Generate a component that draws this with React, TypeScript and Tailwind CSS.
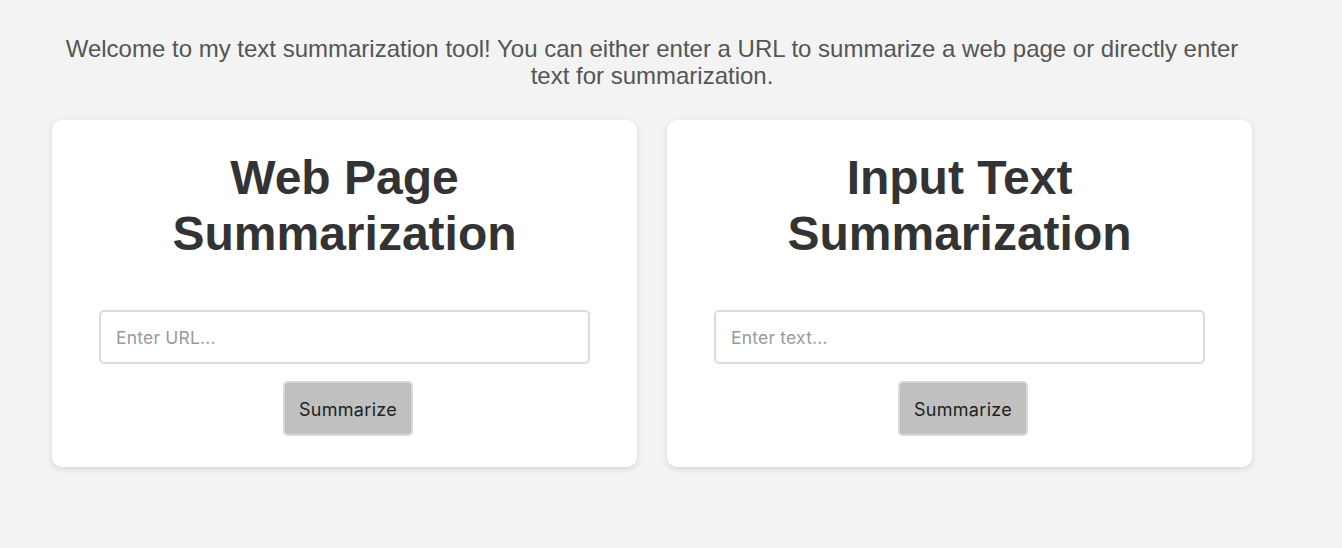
import React from "react";

function Card({ title1, title2, placeholder }: { title1: string; title2: string; placeholder: string }) {
  return (
    <div className="flex w-[585px] flex-col items-center rounded-[10px] bg-white pt-[30px] pb-[31px] shadow-[0_2px_6px_rgba(0,0,0,0.12)]">
      <h1
        className="text-center text-[48px] font-bold leading-[56px] text-[#333]"
        style={{ fontFamily: '"Liberation Sans", Arial, sans-serif' }}
      >
        {title1}
        <br />
        {title2}
      </h1>
      <input
        type="text"
        placeholder={placeholder}
        className="mt-[48px] h-[54px] w-[491px] rounded-[5px] border-2 border-[#dcdcdc] bg-white px-[15px] text-[17.5px] tracking-[0.2px] text-[#333] placeholder:text-[#9a9a9a] outline-none"
        style={{ fontFamily: 'Inter, "Noto Sans", sans-serif' }}
      />
      <button
        className="ml-[7px] mt-[17px] h-[55px] w-[130px] rounded-[5px] border-2 border-[#d8d8d8] bg-[#c0c0c0] pt-[2px] text-[18px] tracking-[0.3px] text-[#222]"
        style={{ fontFamily: 'Inter, "Noto Sans", sans-serif' }}
      >
        Summarize
      </button>
    </div>
  );
}

export default function App() {
  return (
    <div className="min-h-[548px] w-full bg-[#f3f3f3]">
      <div className="ml-[52px] w-[1200px] pt-[35px]">
        <p
          className="text-center text-[24px] leading-[27px] text-[#555]"
          style={{ fontFamily: '"Liberation Sans", Arial, sans-serif' }}
        >
          Welcome to my text summarization tool! You can either enter a URL to summarize a web page or directly enter text for summarization.
        </p>
        <div className="mt-[31px] flex gap-[30px]">
          <Card title1="Web Page" title2="Summarization" placeholder="Enter URL..." />
          <Card title1="Input Text" title2="Summarization" placeholder="Enter text..." />
        </div>
      </div>
    </div>
  );
}
